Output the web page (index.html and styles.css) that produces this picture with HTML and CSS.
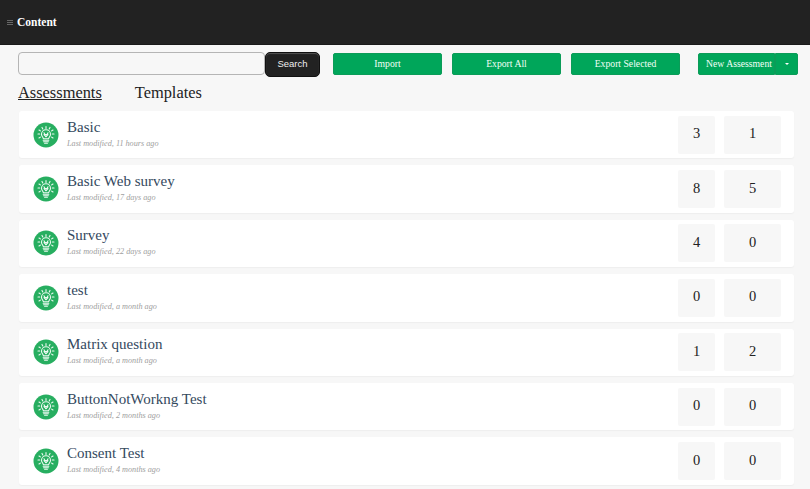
FILE: index.html
```html
<!DOCTYPE html>
<html lang="en">
<head>
<meta charset="utf-8">
<title>Content</title>
<link rel="stylesheet" href="styles.css">
</head>
<body>
<svg class="defs" width="0" height="0" aria-hidden="true">
  <symbol id="bulb" viewBox="0 0 26 26">
    <circle cx="13" cy="13" r="12.5" fill="#27ae60"/>
    <g fill="none" stroke="#eefaf2" stroke-width="1.100" stroke-linecap="round">
      <path d="M10.400 16.800c0-1.500-1.900-2.400-1.900-4.600a4.500 4.500 0 0 1 9 0c0 2.200-1.900 3.100-1.900 4.600z"/>
      <path d="M10.200 18.300h5.600M10.600 19.800h4.800M11.600 21.300h2.800"/>
      <path d="M13 4.600v1.800M9 5.400l.8 1.500M17 5.400l-.8 1.500M6 8l1.400.9M20 8l-1.400.9M5 12h1.700M19.300 12H21M6 16l1.400-.9M20 16l-1.400-.9"/>
      <path d="M11 10.800l1 1.800h2l1-1.800M11 12.600l2 2.200 2-2.200"/>
    </g>
  </symbol>
</svg>
<header class="topbar">
  <span class="menu-icon" aria-hidden="true"><i></i><i></i><i></i></span>
  <span class="topbar-title">Content</span>
</header>
<main class="page">
  <div class="toolbar">
    <div class="search">
      <input class="search-input" type="text" aria-label="Search">
      <button class="search-btn">Search</button>
    </div>
    <div class="actions">
      <button class="btn">Import</button>
      <button class="btn">Export All</button>
      <button class="btn">Export Selected</button>
    </div>
    <div class="split">
      <button class="split-main">New Assessment</button>
      <button class="split-caret" aria-label="More"><i></i></button>
    </div>
  </div>
  <nav class="tabs">
    <a class="tab tab-active">Assessments</a>
    <a class="tab">Templates</a>
  </nav>
  <section class="list">
    <article class="card">
      <svg class="card-icon"><use href="#bulb"/></svg>
      <div class="card-text"><h3 class="card-title">Basic</h3><p class="card-sub">Last modified, 11 hours ago</p></div>
      <div class="stat">3</div><div class="stat stat-wide">1</div>
    </article>
    <article class="card">
      <svg class="card-icon"><use href="#bulb"/></svg>
      <div class="card-text"><h3 class="card-title">Basic Web survey</h3><p class="card-sub">Last modified, 17 days ago</p></div>
      <div class="stat">8</div><div class="stat stat-wide">5</div>
    </article>
    <article class="card">
      <svg class="card-icon"><use href="#bulb"/></svg>
      <div class="card-text"><h3 class="card-title">Survey</h3><p class="card-sub">Last modified, 22 days ago</p></div>
      <div class="stat">4</div><div class="stat stat-wide">0</div>
    </article>
    <article class="card">
      <svg class="card-icon"><use href="#bulb"/></svg>
      <div class="card-text"><h3 class="card-title">test</h3><p class="card-sub">Last modified, a month ago</p></div>
      <div class="stat">0</div><div class="stat stat-wide">0</div>
    </article>
    <article class="card">
      <svg class="card-icon"><use href="#bulb"/></svg>
      <div class="card-text"><h3 class="card-title">Matrix question</h3><p class="card-sub">Last modified, a month ago</p></div>
      <div class="stat">1</div><div class="stat stat-wide">2</div>
    </article>
    <article class="card">
      <svg class="card-icon"><use href="#bulb"/></svg>
      <div class="card-text"><h3 class="card-title">ButtonNotWorkng Test</h3><p class="card-sub">Last modified, 2 months ago</p></div>
      <div class="stat">0</div><div class="stat stat-wide">0</div>
    </article>
    <article class="card">
      <svg class="card-icon"><use href="#bulb"/></svg>
      <div class="card-text"><h3 class="card-title">Consent Test</h3><p class="card-sub">Last modified, 4 months ago</p></div>
      <div class="stat">0</div><div class="stat stat-wide">0</div>
    </article>
  </section>
</main>
</body>
</html>
```
FILE: styles.css
```css
* { box-sizing: border-box; }
html, body { margin: 0; height: 489px; overflow: hidden; }
body { background: #f7f7f7; font-family: "Liberation Serif", "Times New Roman", serif; color: #222; }
.defs { position: absolute; }
.topbar { height: 45px; background: #222; display: flex; align-items: center; padding-left: 7px; gap: 4px; border-bottom: 1px solid #1a1a1a; }
.menu-icon { display: flex; flex-direction: column; gap: 1px; width: 6px; }
.menu-icon i { height: 1px; background: #666; }
.topbar-title { color: #fff; font-weight: 700; font-size: 11.500px; }
.page { padding: 7px 12px 0 18px; }
.toolbar { display: flex; align-items: flex-start; height: 25px; }
.search { display: flex; width: 302px; }
.search-input { width: 247px; height: 23px; background: #f7f7f7; border: 1px solid #b5b5b5; border-radius: 4px; }
.search-btn { width: 55px; height: 25px; background: #222; color: #eee; border: 1px solid #111; border-radius: 5px; font: 9.500px "Liberation Sans", Arial, sans-serif; padding: 0 0 2px; box-shadow: 0 1px 1px #555 inset; }
.actions { display: flex; gap: 10px; margin: 1px 0 0 13px; }
.btn, .split-main, .split-caret { background: #00a65a; color: #f2fff7; border: 1px solid #0b9c58; font-family: inherit; font-size: 9.700px; height: 22px; padding: 0 0 1px; }
.btn { width: 109px; border-radius: 2px; }
.split { display: flex; margin: 1px 0 0 18px; }
.split-main { width: 77px; border-radius: 2px 0 0 2px; padding-left: 5px; }
.split-caret { width: 23px; border-left-color: #0b9c58; border-radius: 0 2px 2px 0; display: flex; align-items: center; justify-content: center; }
.split-caret i { width: 0; height: 0; border: 2.500px solid transparent; border-top-color: #fff; border-bottom: 0; }
.tabs { display: flex; gap: 33px; margin-top: 6px; height: 20px; }
.tab { font-size: 16.400px; line-height: 20px; color: #222; }
.tab-active { text-decoration: underline; text-decoration-thickness: 1px; }
.list { display: flex; flex-direction: column; gap: 7px; margin: 8px 4px 0 1px; }
.card { height: 47.400px; background: #fff; border-radius: 3px; box-shadow: 0 1px 1px #eeeeee; display: flex; align-items: center; padding: 0 13px 0 14px; flex: none; }
.card-icon { width: 26px; height: 26px; flex: none; }
.card-text { flex: 1; margin-left: 8px; padding-bottom: 3px; }
.card-title { margin: 0; font-weight: 400; font-size: 15px; line-height: 19px; color: #34495e; }
.card-sub { margin: 2px 0 0; font-size: 8.200px; line-height: 10px; font-style: italic; color: #a0a0a0; }
.stat { width: 37px; height: 38px; background: #f7f7f7; margin-left: 9px; display: flex; align-items: center; justify-content: center; font-size: 14.500px; color: #222; border-radius: 2px; padding-bottom: 2px; }
.stat-wide { width: 57px; }
```
